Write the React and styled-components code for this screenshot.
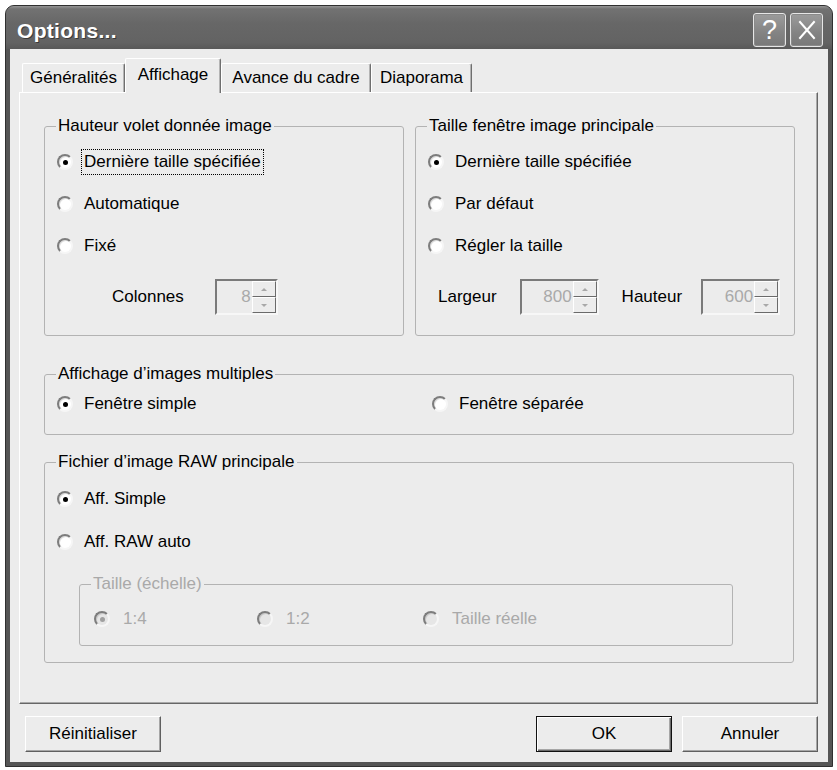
import React from 'react';
import styled, { createGlobalStyle, css } from 'styled-components';

const Global = createGlobalStyle`
  html, body { margin: 0; padding: 0; background: #ffffff; }
  body { font-family: "Liberation Sans", Arial, sans-serif; color: #000; }
  * { box-sizing: border-box; }
`;

const FONT = `17px "Liberation Sans", Arial, sans-serif`;

const Window = styled.div`
  margin: 5px 0 0 5px;
  width: 828px;
  height: 762px;
  display: flex;
  flex-direction: column;
  background: #555555;
  border: 1px solid #303030;
  border-radius: 9px 9px 0 0;
  padding: 0 4px 4px;
`;

const TitleBar = styled.div`
  height: 44px;
  margin: 0 -4px;
  padding: 7px 9px 0 11px;
  display: flex;
  align-items: flex-start;
  border-radius: 8px 8px 0 0;
  background: linear-gradient(#959595 0px, #727272 3px, #676767 40%, #636363 85%, #595959 100%);
`;

const TitleText = styled.div`
  flex: 1;
  padding-top: 6px;
  color: #ffffff;
  font: bold 21px "Liberation Sans", Arial, sans-serif;
  letter-spacing: 0.3px;
  text-shadow: 1px 1px 0 #3a3a3a;
`;

const CaptionButtons = styled.div`
  display: flex;
  gap: 4px;
`;

const CaptionButton = styled.div`
  width: 33px;
  height: 34px;
  border: 1px solid #e6e6e6;
  border-radius: 3px;
  background: linear-gradient(#9c9c9c, #838383 60%, #787878);
  box-shadow: inset 0 0 0 1px #8a8a8a;
  display: flex;
  align-items: center;
  justify-content: center;
  color: #ffffff;
  font: 27px "Liberation Sans", Arial, sans-serif;
`;

const Client = styled.div`
  flex: 1;
  background: #ececec;
  padding: 10px 10px 10px 9px;
  display: flex;
  flex-direction: column;
`;

const TabStrip = styled.div`
  height: 33px;
  padding-left: 3px;
  display: flex;
  align-items: flex-end;
  position: relative;
  z-index: 1;
`;

const Tab = styled.div`
  width: ${(p) => p.$w}px;
  height: ${(p) => (p.$active ? 35 : 29)}px;
  margin-bottom: ${(p) => (p.$active ? -1 : 0)}px;
  display: flex;
  align-items: center;
  justify-content: center;
  font: ${FONT};
  border-top: 1px solid #ffffff;
  border-left: 1px solid #ffffff;
  border-right: 1px solid #6f6f6f;
  border-radius: 2px 2px 0 0;
  background: #ececec;
  box-shadow: inset -1px 0 0 #b4b4b4;
  padding-bottom: ${(p) => (p.$active ? 3 : 0)}px;
`;

const Panel = styled.div`
  height: 612px;
  border: 1px solid;
  border-color: #ffffff #666666 #666666 #ffffff;
  box-shadow: inset -1px -1px 0 #a9a9a9;
  background: #ececec;
  padding: 23px 23px 0 24px;
`;

const TopGroups = styled.div`
  display: grid;
  grid-template-columns: 360px 380px;
  gap: 11px;
`;

const Group = styled.fieldset`
  margin: ${(p) => p.$mt || 0}px 0 0 ${(p) => p.$ml || 0}px;
  padding: 0;
  min-width: 0;
  width: ${(p) => (p.$w ? `${p.$w}px` : 'auto')};
  border: 1px solid #b3b3b3;
  border-radius: 3px;
`;

const Legend = styled.legend`
  margin-left: 11px;
  padding: 0 2px;
  font: ${FONT};
  line-height: 20px;
  color: ${(p) => (p.$disabled ? '#a9a9a9' : '#000')};
`;

const GroupBody = styled.div`
  padding: ${(p) => p.$pad};
  display: flex;
  flex-direction: column;
  gap: ${(p) => p.$gap || 12}px;
`;

const ChoiceGrid = styled.div`
  display: grid;
  grid-template-columns: ${(p) => p.$cols};
`;

const RadioRow = styled.label`
  height: 30px;
  display: flex;
  align-items: center;
  gap: ${(p) => p.$gap || 11}px;
  font: ${FONT};
  color: ${(p) => (p.$disabled ? '#a9a9a9' : '#000')};
`;

const Circle = styled.span`
  flex: none;
  width: 16px;
  height: 16px;
  border-radius: 50%;
  border: 2px solid;
  border-color: #7d7d7d #f6f6f6 #f6f6f6 #7d7d7d;
  background: ${(p) => (p.$disabled ? '#e6e6e6' : '#ffffff')};
  box-shadow: inset 1px 1px 0 ${(p) => (p.$disabled ? '#c8c8c8' : '#dcdcdc')};
  display: flex;
  align-items: center;
  justify-content: center;
  ${(p) =>
    p.$checked &&
    css`
      &::after {
        content: '';
        width: 5px;
        height: 5px;
        border-radius: 50%;
        background: ${p.$disabled ? '#a0a0a0' : '#000'};
      }
    `}
`;

const Focus = styled.span`
  outline: 1px dotted #000;
  outline-offset: 2px;
`;

const FieldRow = styled.div`
  height: 36px;
  margin-top: 6px;
  padding-left: ${(p) => p.$pl}px;
  display: flex;
  align-items: center;
  font: ${FONT};
`;

const FieldLabel = styled.span`
  margin-right: ${(p) => p.$mr}px;
`;

const SpinBox = styled.div`
  width: ${(p) => p.$w}px;
  height: 36px;
  margin-right: ${(p) => p.$mr || 0}px;
  display: flex;
  border: 2px solid;
  border-color: #7a7a7a #f7f7f7 #f7f7f7 #7a7a7a;
  background: #ececec;
`;

const SpinValue = styled.span`
  flex: 1;
  align-self: center;
  text-align: right;
  padding-right: 1px;
  color: #a9a9a9;
  font: ${FONT};
`;

const SpinButtons = styled.div`
  width: 24px;
  display: flex;
  flex-direction: column;
`;

const SpinButton = styled.div`
  flex: 1;
  border: 1px solid;
  border-color: #ffffff #6a6a6a #6a6a6a #ffffff;
  background: #ececec;
  display: flex;
  align-items: center;
  justify-content: center;
  &::after {
    content: '';
    border-left: 3px solid transparent;
    border-right: 3px solid transparent;
    ${(p) => (p.$down ? 'border-top: 3px solid #a8a8a8;' : 'border-bottom: 3px solid #a8a8a8;')}
  }
`;

const Footer = styled.div`
  margin-top: 12px;
  padding-left: 6px;
  display: flex;
  align-items: center;
`;

const Spacer = styled.div`
  flex: 1;
`;

const Button = styled.button`
  width: 136px;
  height: 36px;
  margin-left: ${(p) => p.$ml || 0}px;
  padding: 0;
  font: ${FONT};
  color: #000;
  background: #ececec;
  border: 1px solid;
  ${(p) =>
    p.$default
      ? css`
          border-color: #111;
          box-shadow: inset 1px 1px 0 #ffffff, inset -1px -1px 0 #6a6a6a, inset -2px -2px 0 #a6a6a6;
        `
      : css`
          border-color: #ffffff #5f5f5f #5f5f5f #ffffff;
          box-shadow: inset -1px -1px 0 #a6a6a6;
        `}
`;

const Radio = ({ label, checked, disabled, focused, gap }) => (
  <RadioRow $disabled={disabled} $gap={gap}>
    <Circle $checked={checked} $disabled={disabled} />
    {focused ? <Focus>{label}</Focus> : <span>{label}</span>}
  </RadioRow>
);

const Spin = ({ value, w, mr }) => (
  <SpinBox $w={w} $mr={mr}>
    <SpinValue>{value}</SpinValue>
    <SpinButtons>
      <SpinButton />
      <SpinButton $down />
    </SpinButtons>
  </SpinBox>
);

const CloseGlyph = () => (
  <svg width="22" height="22" viewBox="0 0 22 22">
    <path d="M4 3 L18 19 M18 3 L4 19" stroke="#ffffff" strokeWidth="2" strokeLinecap="square" />
  </svg>
);

const tabs = [
  { label: 'Généralités', w: 103 },
  { label: 'Affichage', w: 96, active: true },
  { label: 'Avance du cadre', w: 150 },
  { label: 'Diaporama', w: 101 },
];

export default function App() {
  return (
    <>
      <Global />
      <Window>
        <TitleBar>
          <TitleText>Options...</TitleText>
          <CaptionButtons>
            <CaptionButton>?</CaptionButton>
            <CaptionButton>
              <CloseGlyph />
            </CaptionButton>
          </CaptionButtons>
        </TitleBar>
        <Client>
          <TabStrip>
            {tabs.map((t) => (
              <Tab key={t.label} $w={t.w} $active={t.active}>
                {t.label}
              </Tab>
            ))}
          </TabStrip>
          <Panel>
            <TopGroups>
              <Group>
                <Legend>Hauteur volet donnée image</Legend>
                <GroupBody $pad="11px 0 20px 12px">
                  <Radio label="Dernière taille spécifiée" checked focused />
                  <Radio label="Automatique" />
                  <Radio label="Fixé" />
                  <FieldRow $pl={55}>
                    <FieldLabel $mr={31}>Colonnes</FieldLabel>
                    <Spin value="8" w={63} />
                  </FieldRow>
                </GroupBody>
              </Group>
              <Group>
                <Legend>Taille fenêtre image principale</Legend>
                <GroupBody $pad="11px 0 20px 12px">
                  <Radio label="Dernière taille spécifiée" checked />
                  <Radio label="Par défaut" />
                  <Radio label="Régler la taille" />
                  <FieldRow $pl={10}>
                    <FieldLabel $mr={23}>Largeur</FieldLabel>
                    <Spin value="800" w={79} mr={23} />
                    <FieldLabel $mr={19}>Hauteur</FieldLabel>
                    <Spin value="600" w={79} />
                  </FieldRow>
                </GroupBody>
              </Group>
            </TopGroups>

            <Group $mt={28}>
              <Legend>Affichage d’images multiples</Legend>
              <GroupBody $pad="5px 0 15px 12px">
                <ChoiceGrid $cols="375px 1fr">
                  <Radio label="Fenêtre simple" checked />
                  <Radio label="Fenêtre séparée" />
                </ChoiceGrid>
              </GroupBody>
            </Group>

            <Group $mt={17}>
              <Legend>Fichier d’image RAW principale</Legend>
              <GroupBody $pad="12px 0 16px 12px" $gap={13}>
                <Radio label="Aff. Simple" checked />
                <Radio label="Aff. RAW auto" />
                <Group $mt={4} $ml={22} $w={654}>
                  <Legend $disabled>Taille (échelle)</Legend>
                  <GroupBody $pad="10px 0 11px 14px">
                    <ChoiceGrid $cols="163px 166px 1fr">
                      <Radio label="1:4" checked disabled gap={13} />
                      <Radio label="1:2" disabled gap={13} />
                      <Radio label="Taille réelle" disabled gap={13} />
                    </ChoiceGrid>
                  </GroupBody>
                </Group>
              </GroupBody>
            </Group>
          </Panel>
          <Footer>
            <Button>Réinitialiser</Button>
            <Spacer />
            <Button $default>OK</Button>
            <Button $ml={10}>Annuler</Button>
          </Footer>
        </Client>
      </Window>
    </>
  );
}
